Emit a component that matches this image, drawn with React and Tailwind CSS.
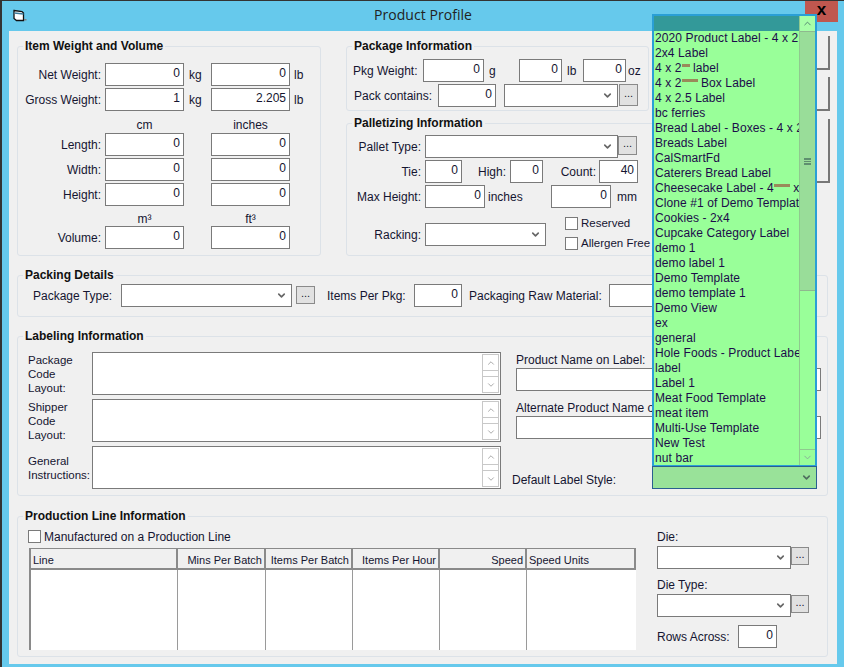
import { ChevronDown, ChevronUp } from "lucide-react";

const templates = [
  "2020 Product Label - 4 x 2.5",
  "2x4 Label",
  "4 x 2|8| label",
  "4 x 2|16| Box Label",
  "4 x 2.5 Label",
  "bc ferries",
  "Bread Label - Boxes - 4 x 2.5",
  "Breads Label",
  "CalSmartFd",
  "Caterers Bread Label",
  "Cheesecake Label - 4|16| x 2",
  "Clone #1 of Demo Template",
  "Cookies - 2x4",
  "Cupcake Category Label",
  "demo 1",
  "demo label 1",
  "Demo Template",
  "demo template 1",
  "Demo View",
  "ex",
  "general",
  "Hole Foods - Product Label",
  "label",
  "Label 1",
  "Meat Food Template",
  "meat item",
  "Multi-Use Template",
  "New Test",
  "nut bar",
];

const lineColumns = [
  { name: "Line", width: "w-[147px]", align: "pl-[2px] text-left" },
  { name: "Mins Per Batch", width: "w-[88px]", align: "pr-[2px] text-right" },
  { name: "Items Per Batch", width: "w-[87px]", align: "pr-[2px] text-right" },
  { name: "Items Per Hour", width: "w-[87px]", align: "pr-[2px] text-right" },
  { name: "Speed", width: "w-[87px]", align: "pr-[2px] text-right" },
  { name: "Speed Units", width: "flex-1", align: "pl-[2px] text-left" },
];

const Field = ({ value = "", className = "" }) => (
  <div
    className={`h-[23px] shrink-0 border border-[#7a7a7a] bg-white pr-[3px] text-right leading-[18px] ${className}`}
  >
    {value}
  </div>
);

const Select = ({ className = "" }) => (
  <div
    className={`flex h-[23px] shrink-0 items-center justify-end border border-[#7a7a7a] bg-white pr-1 ${className}`}
  >
    <ChevronDown size={11} strokeWidth={3.5} className="text-[#666666]" />
  </div>
);

const Dots = ({ className = "" }) => (
  <div
    className={`flex shrink-0 items-center justify-center border border-[#8a8a8a] bg-[#e1e1e1] pb-1 text-[11px] leading-none ${className}`}
  >
    ...
  </div>
);

const Label = ({ children, className = "" }) => (
  <span className={`shrink-0 whitespace-nowrap ${className}`}>{children}</span>
);

const Group = ({ title, className = "", children }) => (
  <div className={`relative rounded-[3px] border border-[#dce2e8] ${className}`}>
    <span className="absolute left-[5px] top-[-8px] bg-[#f0f0f0] px-[2px] font-bold leading-[14px] text-[#111111]">
      {title}
    </span>
    {children}
  </div>
);

const Check = ({ className = "" }) => (
  <div className={`h-[13px] w-[13px] shrink-0 border border-[#7a7a7a] bg-white ${className}`} />
);

const CodeBox = ({ lines }) => (
  <div className="flex h-[43px]">
    <div className="flex w-[64px] shrink-0 flex-col justify-center text-[11.5px] leading-[14px]">
      {lines.map((line) => (
        <span key={line}>{line}</span>
      ))}
    </div>
    <div className="flex w-[409px] shrink-0 justify-end border border-[#7a7a7a] bg-white py-[1px] pr-[1px]">
      <div className="flex w-[17px] flex-col text-[#9a9a9a]">
        <div className="flex h-[17px] items-center justify-center border border-[#c8c8c8]">
          <ChevronUp size={10} />
        </div>
        <div className="flex-1 border-x border-[#c8c8c8]" />
        <div className="flex h-[17px] items-center justify-center border border-[#c8c8c8]">
          <ChevronDown size={10} />
        </div>
      </div>
    </div>
  </div>
);

const TemplateName = ({ name }) => {
  const parts = name.split("|");
  if (parts.length === 1) return name;
  return (
    <>
      {parts[0]}
      <span
        style={{ width: `${parts[1]}px` }}
        className="mb-[5px] inline-block h-[3px] bg-[#9a8a5a]"
      />
      {parts[2]}
    </>
  );
};

const TemplateDropdown = () => (
  <div className="absolute left-[650px] top-[13px] z-10 w-[165px]">
    <div className="flex h-[452px] border-2 border-b border-[#2a9fd6] bg-[#99ff99]">
      <div className="flex min-w-0 flex-1 flex-col">
        <div className="h-[15px] shrink-0 bg-[#339999]" />
        <div className="overflow-hidden pl-[1px] text-[12px] leading-[15px] tracking-[0.1px] text-[#1c0b4a]">
          {templates.map((name) => (
            <div key={name} className="h-[15px] whitespace-nowrap">
              <TemplateName name={name} />
            </div>
          ))}
        </div>
      </div>
      <div className="flex w-[16px] shrink-0 flex-col border-l border-[#8fc98f]">
        <div className="flex h-[15px] items-center justify-center bg-[#a8ffa8] text-[#4f7f6f]">
          <ChevronUp size={11} />
        </div>
        <div className="flex h-[260px] items-center justify-center border-y border-[#8fb88f] bg-[#99dd99]">
          <div className="h-[7px] w-[7px] border-y-2 border-[#5f8f6f] bg-[linear-gradient(#5f8f6f,#5f8f6f)] bg-[length:100%_1px] bg-center bg-no-repeat" />
        </div>
        <div className="flex-1" />
        <div className="flex h-[16px] items-center justify-center border-t border-[#8fc98f] text-[#8aa89a]">
          <ChevronDown size={11} />
        </div>
      </div>
    </div>
    <div className="flex h-[23px] items-center justify-end border border-[#2a5f8f] bg-[#99e299] pr-1">
      <ChevronDown size={11} strokeWidth={3.5} className="text-[#4f6f5f]" />
    </div>
  </div>
);

const App = () => {
  return (
    <div className="relative h-[667px] w-[844px] overflow-hidden border-l-2 border-t-[1px] border-[#333333] bg-[#66c9ec] font-['Liberation_Sans',Arial,sans-serif] text-[12px] text-[#151530]">
      {/* title bar */}
      <div className="relative flex h-[30px] items-center justify-center pb-[3px] font-['Open_Sans',sans-serif] text-[14px] tracking-[0.05px] text-[#222222]">
        <svg viewBox="0 0 14 14" className="absolute left-[11px] top-[8px] h-[14px] w-[14px]">
          <path d="M1 1.5l8 1 1.500 1.500v7.500h-7l-2.500-2z" fill="#ffffff" stroke="#111111" strokeWidth="1.3" />
          <path d="M1.500 4l9 1" stroke="#3a7a9a" strokeWidth="1.500" fill="none" />
          <path d="M11 10h2.500v1.500h-2.500z" fill="#808080" />
        </svg>
        Product Profile
        <div className="absolute right-[6px] top-[-1px] flex h-[22px] w-[33px] items-center justify-center bg-[#c0574f] pb-[3px] font-['Liberation_Sans',sans-serif] text-[17px] font-bold leading-none text-black">
          x
        </div>
      </div>

      {/* form surface */}
      <div className="ml-[7px] h-[633px] w-[828px] bg-[#f0f0f0] pl-[8px] pt-[15px]">
        <div className="flex h-[210px]">
          <Group title="Item Weight and Volume" className="h-[210px] w-[304px] shrink-0">
            <div className="flex flex-col pt-[16px]">
              <div className="flex h-[25px] items-start">
                <Label className="w-[83px] pt-[3px] text-right">Net Weight:</Label>
                <Field value="0" className="ml-[4px] w-[79px]" />
                <Label className="ml-[5px] w-[22px] pt-[3px]">kg</Label>
                <Field value="0" className="w-[79px]" />
                <Label className="ml-[4px] pt-[3px]">lb</Label>
              </div>
              <div className="flex h-[25px] items-start">
                <Label className="w-[83px] pt-[3px] text-right">Gross Weight:</Label>
                <Field value="1" className="ml-[4px] w-[79px]" />
                <Label className="ml-[5px] w-[22px] pt-[3px]">kg</Label>
                <Field value="2.205" className="w-[79px]" />
                <Label className="ml-[4px] pt-[3px]">lb</Label>
              </div>
              <div className="flex h-[20px] items-end pb-[1px] pl-[87px] leading-[14px]">
                <span className="w-[79px] text-center">cm</span>
                <span className="ml-[27px] w-[79px] text-center">inches</span>
              </div>
              {["Length:", "Width:", "Height:"].map((name) => (
                <div key={name} className="flex h-[25px] items-start">
                  <Label className="w-[83px] pt-[3px] text-right">{name}</Label>
                  <Field value="0" className="ml-[4px] w-[79px]" />
                  <Field value="0" className="ml-[27px] w-[79px]" />
                </div>
              ))}
              <div className="flex h-[18px] items-end pl-[87px] leading-[14px]">
                <span className="w-[79px] text-center">m³</span>
                <span className="ml-[27px] w-[79px] text-center">ft³</span>
              </div>
              <div className="flex h-[25px] items-start">
                <Label className="w-[83px] pt-[3px] text-right">Volume:</Label>
                <Field value="0" className="ml-[4px] w-[79px]" />
                <Field value="0" className="ml-[27px] w-[79px]" />
              </div>
            </div>
          </Group>

          <div className="ml-[25px] flex flex-col">
            <Group title="Package Information" className="h-[65px] w-[303px] pl-[6px] pt-[12px]">
              <div className="flex h-[25px] items-start">
                <Label className="w-[70px] pt-[3px]">Pkg Weight:</Label>
                <Field value="0" className="w-[61px]" />
                <Label className="ml-[5px] w-[30px] pt-[3px]">g</Label>
                <Field value="0" className="w-[43px]" />
                <Label className="ml-[5px] w-[16px] pt-[3px]">lb</Label>
                <Field value="0" className="w-[43px]" />
                <Label className="ml-[2px] pt-[3px]">oz</Label>
              </div>
              <div className="flex items-start">
                <Label className="w-[85px] pl-[1px] pt-[3px]">Pack contains:</Label>
                <Field value="0" className="w-[58px]" />
                <Select className="ml-[8px] w-[114px]" />
                <Dots className="ml-[1px] h-[22px] w-[19px]" />
              </div>
            </Group>

            <Group title="Palletizing Information" className="mt-[12px] h-[133px] w-[459px] pl-[3px] pt-[11px]">
              <div className="flex h-[25px] items-start">
                <Label className="w-[75px] pr-[4px] pt-[3px] text-right">Pallet Type:</Label>
                <Select className="w-[193px]" />
                <Dots className="mt-[1px] h-[19px] w-[19px]" />
              </div>
              <div className="flex h-[25px] items-start">
                <Label className="w-[75px] pr-[4px] pt-[3px] text-right">Tie:</Label>
                <Field value="0" className="w-[37px]" />
                <Label className="w-[48px] pr-[4px] pt-[3px] text-right">High:</Label>
                <Field value="0" className="w-[33px]" />
                <Label className="w-[56px] pr-[3px] pt-[3px] text-right">Count:</Label>
                <Field value="40" className="w-[39px]" />
              </div>
              <div className="flex h-[38px] items-start">
                <Label className="w-[75px] pr-[4px] pt-[3px] text-right">Max Height:</Label>
                <Field value="0" className="w-[60px]" />
                <Label className="ml-[3px] w-[63px] pt-[3px]">inches</Label>
                <Field value="0" className="w-[60px]" />
                <Label className="ml-[6px] pt-[3px]">mm</Label>
              </div>
              <div className="flex items-start">
                <Label className="w-[75px] pr-[4px] pt-[3px] text-right">Racking:</Label>
                <Select className="w-[121px]" />
                <div className="ml-[19px] mt-[-6px] flex flex-col gap-[7px] text-[11.5px] leading-[13px]">
                  <div className="flex items-center gap-[3px]">
                    <Check />
                    <span>Reserved</span>
                  </div>
                  <div className="flex items-center gap-[3px]">
                    <Check />
                    <span>Allergen Free</span>
                  </div>
                </div>
              </div>
            </Group>
          </div>

          <div className="absolute left-[798px] top-[35px] flex flex-col">
            <div className="h-[34px] w-[30px] border-b-2 border-r-2 border-[#777777]" />
            <div className="mt-[7px] h-[34px] w-[30px] border-b-2 border-r-2 border-[#777777]" />
            <div className="mt-[8px] h-[64px] w-[30px] border-b-2 border-r-2 border-[#777777]" />
          </div>
        </div>

        <Group title="Packing Details" className="mt-[19px] flex h-[42px] w-[811px] items-start pl-[15px] pt-[8px]">
          <Label className="w-[88px] pt-[3px]">Package Type:</Label>
          <Select className="w-[171px]" />
          <Dots className="ml-[4px] mt-[2px] h-[18px] w-[19px]" />
          <Label className="ml-[12px] w-[87px] pt-[3px]">Items Per Pkg:</Label>
          <Field value="0" className="w-[48px]" />
          <Label className="ml-[7px] w-[140px] pt-[3px]">Packaging Raw Material:</Label>
          <Field className="w-[200px]" />
        </Group>

        <Group title="Labeling Information" className="mt-[19px] flex h-[160px] w-[811px] pl-[10px] pt-[15px]">
          <div className="flex w-[473px] shrink-0 flex-col gap-[4px]">
            <CodeBox lines={["Package", "Code", "Layout:"]} />
            <CodeBox lines={["Shipper", "Code", "Layout:"]} />
            <CodeBox lines={["General", "Instructions:"]} />
          </div>
          <div className="ml-[11px] flex flex-col">
            <Label className="h-[16px] pl-[4px] leading-[16px]">Product Name on Label:</Label>
            <Field className="ml-[4px] w-[305px]" />
            <Label className="mt-[9px] h-[16px] pl-[4px] leading-[16px]">Alternate Product Name on Label:</Label>
            <Field className="ml-[4px] w-[305px]" />
            <Label className="mt-[34px] leading-[14px]">Default Label Style:</Label>
          </div>
        </Group>

        <Group title="Production Line Information" className="mt-[20px] flex h-[141px] w-[811px] pl-[10px] pt-[13px]">
          <div className="w-[608px] shrink-0">
            <div className="flex h-[18px] items-start gap-[3px] leading-[14px]">
              <Check />
              <span>Manufactured on a Production Line</span>
            </div>
            <div className="ml-[1px] flex h-[102px] w-[607px] flex-col border-t border-l-2 border-[#8a8a8a] bg-white">
              <div className="flex h-[21px] shrink-0 bg-[#f0f0f0]">
                {lineColumns.map((column) => (
                  <div
                    key={column.name}
                    className={`${column.width} whitespace-nowrap border-r-2 border-b-2 border-[#8a8a8a] pt-[4px] text-[11px] leading-[14px] ${column.align}`}
                  >
                    {column.name}
                  </div>
                ))}
              </div>
              <div className="flex flex-1">
                {lineColumns.map((column) => (
                  <div
                    key={column.name}
                    className={`${column.width} ${column.name === "Speed Units" ? "" : "border-r border-[#9a9a9a]"}`}
                  />
                ))}
              </div>
            </div>
          </div>
          <div className="ml-[21px] flex flex-col">
            <Label className="h-[16px] leading-[14px]">Die:</Label>
            <div className="flex items-start">
              <Select className="w-[134px]" />
              <Dots className="mt-[1px] h-[18px] w-[18px]" />
            </div>
            <Label className="mt-[9px] h-[16px] leading-[14px]">Die Type:</Label>
            <div className="flex items-start">
              <Select className="w-[134px]" />
              <Dots className="mt-[1px] h-[18px] w-[18px]" />
            </div>
            <div className="mt-[8px] flex items-start">
              <Label className="w-[81px] pt-[3px]">Rows Across:</Label>
              <Field value="0" className="w-[39px]" />
            </div>
          </div>
        </Group>
      </div>

      <TemplateDropdown />
    </div>
  );
};

export default App;
